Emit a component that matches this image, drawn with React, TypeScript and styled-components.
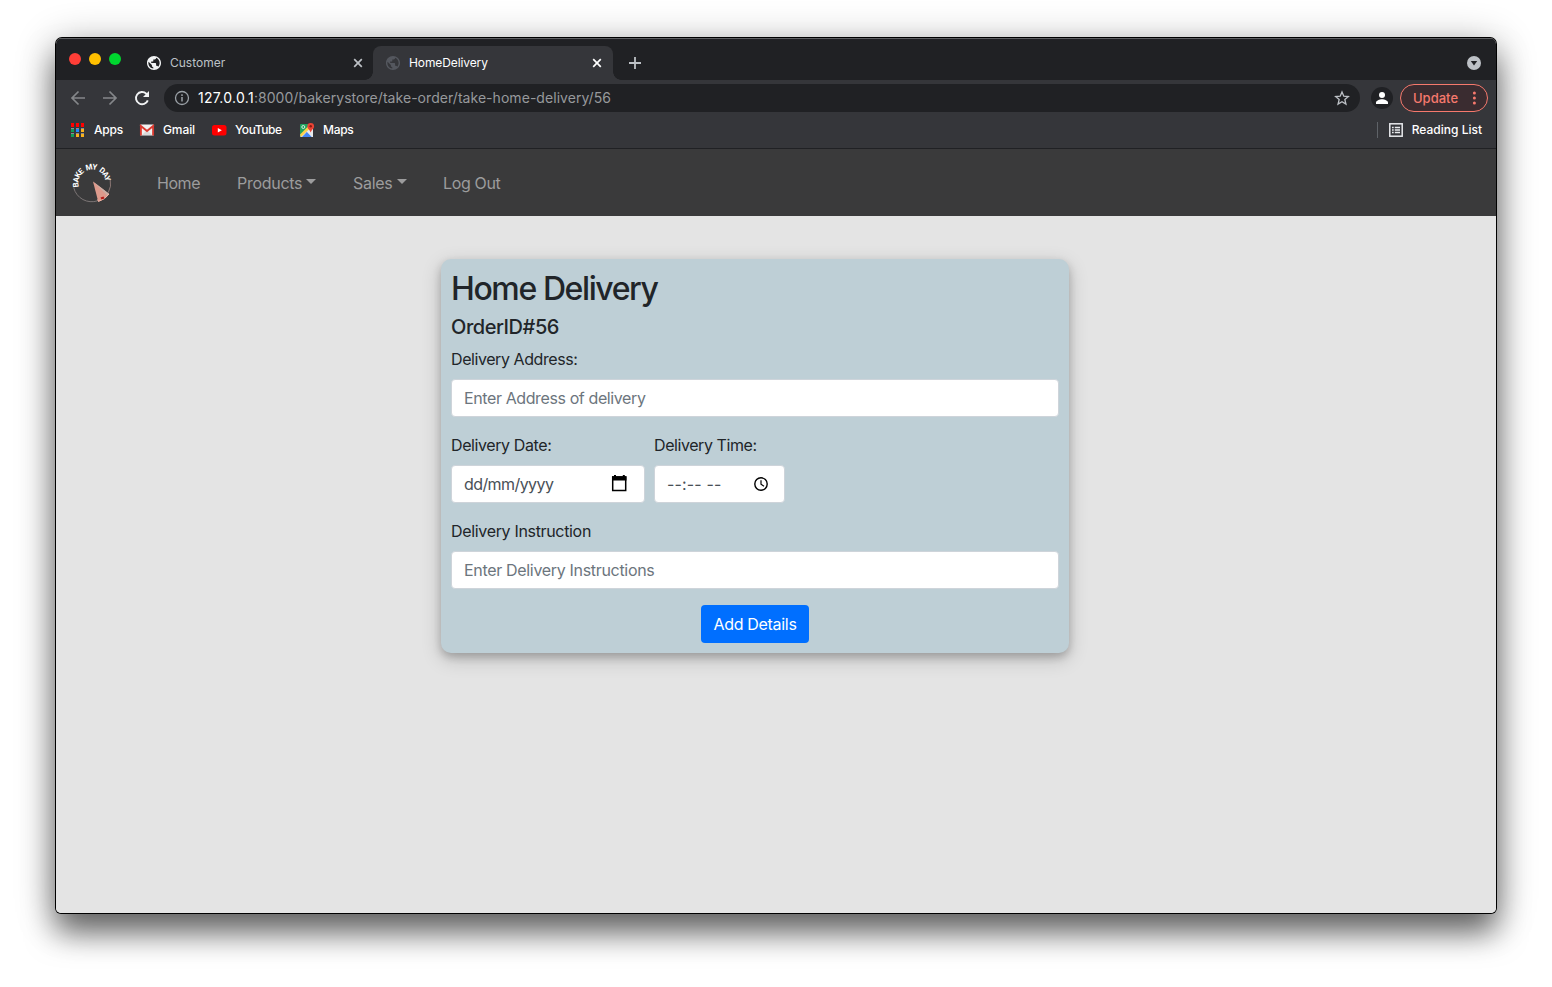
import React from "react";
import styled, { createGlobalStyle } from "styled-components";

const GlobalStyle = createGlobalStyle`
  * { box-sizing: border-box; }
  body {
    margin: 0;
    background: #fff;
    font-family: Inter, Roboto, "Liberation Sans", sans-serif;
    overflow: hidden;
  }
`;

const Desktop = styled.main`
  height: 987px;
  padding: 38px 56px 0;
`;

const Window = styled.div`
  display: flex;
  flex-direction: column;
  width: 1440px;
  height: 875px;
  border-radius: 6px 6px 5px 5px;
  overflow: hidden;
  background: #e4e4e4;
  box-shadow: 0 0 0 1px #000, 0 20px 30px rgba(0, 0, 0, 0.5), 0 6px 40px rgba(0, 0, 0, 0.32);
`;

const TabStrip = styled.div`
  display: flex;
  height: 42px;
  background: #202124;
  box-shadow: inset 0 1px 0 #5f6063;
`;

const Lights = styled.div`
  display: flex;
  gap: 8px;
  padding: 15px 0 0 13px;
  width: 78px;
`;

const Light = styled.span<{ $color: string }>`
  width: 12px;
  height: 12px;
  border-radius: 50%;
  background: ${(p) => p.$color};
`;

const Tab = styled.div<{ $active?: boolean }>`
  display: flex;
  align-items: center;
  position: relative;
  width: ${(p) => (p.$active ? 240 : 239)}px;
  height: 34px;
  margin-top: 8px;
  padding: 0 ${(p) => (p.$active ? 10 : 9)}px 0 12px;
  border-radius: 8px 8px 0 0;
  background: ${(p) => (p.$active ? "#35363a" : "transparent")};
  color: ${(p) => (p.$active ? "#fff" : "#bdc1c6")};
  &::before, &::after {
    content: "";
    display: ${(p) => (p.$active ? "block" : "none")};
    position: absolute;
    bottom: 0;
    width: 8px;
    height: 8px;
  }
  &::before {
    left: -8px;
    background: radial-gradient(circle at 0 0, transparent 7.5px, #35363a 8px);
  }
  &::after {
    right: -8px;
    background: radial-gradient(circle at 100% 0, transparent 7.5px, #35363a 8px);
  }
`;

const TabTitle = styled.span<{ $spacing: number }>`
  flex: 1;
  margin-left: 8px;
  padding-bottom: 2px;
  font-size: 12px;
  letter-spacing: ${(p) => p.$spacing}px;
`;

const NewTab = styled.div`
  flex: 1;
  padding: 18px 0 0 15px;
  line-height: 0;
`;

const TabSearch = styled.div`
  padding: 18px 15px 0 0;
  line-height: 0;
`;

const Toolbar = styled.div`
  display: flex;
  align-items: center;
  height: 36px;
  padding: 0 8px 0 14px;
  background: #35363a;
`;

const NavIcons = styled.div`
  display: flex;
  gap: 16px;
  width: 94px;
`;

const AddressBar = styled.div`
  display: flex;
  align-items: center;
  width: 1196px;
  height: 28px;
  padding: 0 10px;
  border-radius: 14px;
  background: #202124;
`;

const Url = styled.span`
  flex: 1;
  margin-left: 8px;
  padding-bottom: 1px;
  font-size: 14px;
  letter-spacing: 0.045px;
  color: #97999c;
`;

const Host = styled.span`
  color: #fff;
  letter-spacing: 0.3px;
`;

const Avatar = styled.div`
  width: 22px;
  height: 22px;
  margin: 0 7px 0 11px;
  border-radius: 50%;
  background: #202124;
  line-height: 0;
`;

const UpdateButton = styled.button`
  display: flex;
  align-items: center;
  justify-content: space-between;
  width: 88px;
  height: 28px;
  padding: 0 11px 0 12px;
  border: 1px solid #f6796d;
  border-radius: 14px;
  background: #3a2c30;
  color: #f6796d;
  font: 500 13px Inter, sans-serif;
  letter-spacing: 0;
`;

const Bookmarks = styled.div`
  display: flex;
  align-items: center;
  height: 33px;
  padding: 0 14px 5px;
  background: #35363a;
  border-bottom: 1px solid #202124;
`;

const Bookmark = styled.div<{ $width?: number; $spacing?: number }>`
  display: flex;
  align-items: center;
  gap: 8px;
  width: ${(p) => (p.$width ? `${p.$width}px` : "auto")};
  color: #fff;
  font-size: 12px;
  font-weight: 500;
  white-space: nowrap;
  letter-spacing: ${(p) => p.$spacing ?? 0}px;
`;

const Spacer = styled.div`
  flex: 1;
`;

const Divider = styled.div`
  width: 1px;
  height: 16px;
  margin-right: 11px;
  background: #5f6368;
`;

const Navbar = styled.nav`
  display: flex;
  align-items: center;
  height: 67px;
  padding-left: 16px;
  background: #3a3a3b;
`;

const Brand = styled.div`
  width: 85px;
  line-height: 0;
`;

const NavLink = styled.a<{ $width: number; $spacing: number }>`
  display: flex;
  align-items: center;
  width: ${(p) => p.$width}px;
  color: #9c9c9d;
  font-size: 16px;
  letter-spacing: ${(p) => p.$spacing}px;
  white-space: nowrap;
`;

const Caret = styled.span`
  margin: 0 0 2px 4px;
  border-top: 5px solid;
  border-left: 5px solid transparent;
  border-right: 5px solid transparent;
`;

const Page = styled.section`
  flex: 1;
  padding: 43px 0 0 385px;
  background: #e4e4e4;
`;

const Card = styled.form`
  width: 628px;
  height: 394px;
  padding: 10px;
  border-radius: 10px;
  background: #becfd6;
  color: #212529;
  box-shadow: 0 4px 8px rgba(0, 0, 0, 0.2), 0 6px 20px rgba(0, 0, 0, 0.19);
`;

const Title = styled.h2`
  margin: 0 0 7px;
  padding-top: 1px;
  font-size: 32px;
  font-weight: 500;
  line-height: 38px;
  letter-spacing: -1.4px;
`;

const Subtitle = styled.h5`
  margin: 0 0 8px;
  font-size: 20px;
  font-weight: 500;
  line-height: 24px;
  letter-spacing: -0.45px;
`;

const Group = styled.div<{ $width?: number }>`
  width: ${(p) => (p.$width ? `${p.$width}px` : "100%")};
  margin-bottom: 16px;
`;

const Row = styled.div`
  display: flex;
  gap: 9px;
`;

const Label = styled.label<{ $spacing: number }>`
  display: block;
  margin-bottom: 8px;
  font-size: 16px;
  line-height: 24px;
  letter-spacing: ${(p) => p.$spacing}px;
  white-space: nowrap;
`;

const Field = styled.div<{ $spacing: number; $dark?: boolean }>`
  display: flex;
  align-items: center;
  justify-content: space-between;
  height: 38px;
  padding: 0 14px 0 12px;
  border: 1px solid #ced4da;
  border-radius: 4px;
  background: #fff;
  color: ${(p) => (p.$dark ? "#495057" : "#6c757d")};
  font-size: 16px;
  letter-spacing: ${(p) => p.$spacing}px;
  white-space: nowrap;
`;

const Actions = styled.div`
  display: flex;
  justify-content: center;
`;

const Submit = styled.button`
  width: 108px;
  height: 38px;
  padding: 0;
  border: 0;
  border-radius: 4px;
  background: #006fff;
  color: #fff;
  font: 400 16px Inter, sans-serif;
  letter-spacing: -0.3px;
  white-space: nowrap;
`;

const Globe = ({ color }: { color: string }) => (
  <svg width="16" height="16" viewBox="0.6 0.6 22.800 22.800" fill={color}>
    <path d="M12 2C6.480 2 2 6.480 2 12s4.480 10 10 10 10-4.480 10-10S17.520 2 12 2zm-1 17.930c-3.950-.49-7-3.850-7-7.930 0-.62.08-1.210.21-1.790L9 15v1c0 1.100.9 2 2 2v1.930zm6.900-2.540c-.26-.81-1-1.390-1.900-1.390h-1v-3c0-.55-.45-1-1-1H8v-2h2c.55 0 1-.45 1-1V7h2c1.100 0 2-.9 2-2v-.41c2.930 1.190 5 4.060 5 7.410 0 2.080-.8 3.970-2.100 5.390z" />
  </svg>
);

const Close = ({ color }: { color: string }) => (
  <svg width="12" height="12" viewBox="0 0 12 12" stroke={color} strokeWidth="1.700">
    <path d="m2.200 2.200 7.600 7.600M9.800 2.200 2.200 9.800" />
  </svg>
);

const dots = ["#f00", "#f00", "#f00", "#0f9d58", "#1e88ff", "#f9b21d", "#0f9d58", "#f9b21d", "#f9b21d"];

const AppsIcon = () => (
  <svg width="16" height="16" viewBox="0 0 16 16">
    {dots.map((c, i) => (
      <g key={i}>
        <rect x={1 + (i % 3) * 5} y={2 + Math.floor(i / 3) * 5} width="3" height="3" fill={c} />
        <rect x={1 + (i % 3) * 5} y={1 + Math.floor(i / 3) * 5} width="3" height="1" fill={i < 3 ? c : "#8b8c8e"} />
      </g>
    ))}
  </svg>
);

const GmailIcon = () => (
  <svg width="16" height="16" viewBox="0 0 16 16">
    <rect x="1" y="2.500" width="14" height="11" rx="1" fill="#f1f1f1" />
    <path d="m3 13 5-5 5 5" fill="#dadada" />
    <path d="M1.900 13.500V4L8 9l6.100-5v9.500" fill="none" stroke="#d93a30" strokeWidth="1.900" />
  </svg>
);

const YouTubeIcon = () => (
  <svg width="16" height="16" viewBox="0 0 16 16">
    <rect x="1" y="3" width="14.500" height="10.500" rx="2.500" fill="#f00" />
    <path d="m6.800 6 4 2.200-4 2.200Z" fill="#fff" />
  </svg>
);

const MapsIcon = () => (
  <svg width="16" height="16" viewBox="0 0 16 16">
    <rect x="1" y="2" width="13" height="13" rx="1" fill="#1fa15d" />
    <path d="M1 14 13 3l1 1v10l-1 1H2Z" fill="#e8eaed" />
    <path d="m1 12.500 9-9 2 2-10 9.500Z" fill="#fbd04b" />
    <path d="m3 15 5-5.200 5 5.200Z" fill="#4285f4" />
    <path d="m8 10 1.500-1.500L14 13v2h-1Z" fill="#e8eaed" />
    <circle cx="4.300" cy="5" r="1.500" fill="none" stroke="#fff" strokeWidth=".8" />
    <path d="M11.700 1a3.400 3.400 0 0 0-3.400 3.400c0 2.400 2.700 3.200 3.400 6.200.7-3 3.400-3.800 3.400-6.200A3.400 3.400 0 0 0 11.700 1Z" fill="#ea4335" />
    <circle cx="11.700" cy="4.300" r="1.200" fill="#8b1a12" />
  </svg>
);

const BrandLogo = () => (
  <svg width="42" height="44" viewBox="0 0 42 44">
    <defs>
      <path id="brand-arc" d="M7 26A13.600 13.600 0 1 1 33.600 23" />
    </defs>
    <path d="M1.800 27A18.500 18.500 0 0 0 25.500 39.800" fill="none" stroke="#8d8585" strokeWidth=".8" />
    <path d="M38.200 18.500A18.500 18.500 0 0 1 36.300 31.500" fill="none" stroke="#a08683" strokeWidth=".8" />
    <path d="M21 20.500 37 32.800q-3.500 5.500-10.800 7.800Z" fill="#dd9a8c" />
    <path d="m21 20.500 16 12.300-1.500 1.800Z" fill="#c9b0a6" />
    <path d="m25.500 38.500 1 2q7-2.200 10.500-7.500" fill="none" stroke="#f4b5a5" strokeWidth="1" />
    <path d="m28.500 36.500 3-1 1 2-3 1Z" fill="#b51c18" />
    <text fill="#fff" fontFamily="Roboto, sans-serif" fontWeight="700" fontSize="7.800" wordSpacing="1.600" letterSpacing="-0.800">
      <textPath href="#brand-arc">BAKE MY DAY</textPath>
    </text>
  </svg>
);

export default function App() {
  return (
    <>
      <GlobalStyle />
      <Desktop>
        <Window>
          <TabStrip>
            <Lights>
              <Light $color="#ff3e37" />
              <Light $color="#ffc000" />
              <Light $color="#00d62f" />
            </Lights>
            <Tab>
              <Globe color="#f1f3f4" />
              <TabTitle $spacing={0}>Customer</TabTitle>
              <Close color="#bdc1c6" />
            </Tab>
            <Tab $active>
              <Globe color="#54575e" />
              <TabTitle $spacing={-0.1}>HomeDelivery</TabTitle>
              <Close color="#fff" />
            </Tab>
            <NewTab>
              <svg width="14" height="14" viewBox="0 0 14 14" stroke="#bdc1c6" strokeWidth="1.800">
                <path d="M7 1v12M1 7h12" />
              </svg>
            </NewTab>
            <TabSearch>
              <svg width="14" height="14" viewBox="0 0 14 14">
                <circle cx="7" cy="7" r="7" fill="#bdc1c6" />
                <path d="M3.800 5h6.400L7 9.500Z" fill="#202124" />
              </svg>
            </TabSearch>
          </TabStrip>

          <Toolbar>
            <NavIcons>
              <svg width="16" height="16" viewBox="0 0 16 16" fill="none" stroke="#85878a" strokeWidth="1.700">
                <path d="M15 8H2M8.500 1.500 2 8l6.500 6.500" />
              </svg>
              <svg width="16" height="16" viewBox="0 0 16 16" fill="none" stroke="#85878a" strokeWidth="1.700">
                <path d="M1 8h13M7.500 1.500 14 8l-6.500 6.500" />
              </svg>
              <svg width="16" height="16" viewBox="0 0 16 16">
                <path d="M13.800 10.300A6.100 6.100 0 1 1 12.300 3.700L14 5.500" fill="none" stroke="#f1f3f4" strokeWidth="1.900" />
                <path d="M15 1v6H9Z" fill="#f1f3f4" />
              </svg>
            </NavIcons>
            <AddressBar>
              <svg width="16" height="16" viewBox="0 0 16 16" fill="none" stroke="#9aa0a6">
                <circle cx="8" cy="8" r="6.500" strokeWidth="1.300" />
                <path d="M8 7v4.500M8 4.300v1.600" strokeWidth="1.500" />
              </svg>
              <Url>
                <Host>127.0.0.1</Host>:8000/bakerystore/take-order/take-home-delivery/56
              </Url>
              <svg width="16" height="16" viewBox="0 0 24 24" fill="none" stroke="#bdc1c6" strokeWidth="2">
                <path d="m12 3 2.700 6.300 6.800.6-5.200 4.500 1.600 6.700-5.900-3.600-5.900 3.600 1.600-6.700L2.500 9.900l6.800-.6Z" />
              </svg>
            </AddressBar>
            <Avatar>
              <svg width="22" height="22" viewBox="0 0 22 22" fill="#fff">
                <circle cx="11" cy="8" r="3" />
                <path d="M5 17v-1.500c0-2 3.500-3.300 6-3.300s6 1.300 6 3.300V17Z" />
              </svg>
            </Avatar>
            <UpdateButton>
              Update
              <svg width="4" height="14" viewBox="0 0 4 14" fill="#f6796d">
                <circle cx="2.400" cy="2" r="1.500" />
                <circle cx="2.400" cy="7" r="1.500" />
                <circle cx="2.400" cy="12" r="1.500" />
              </svg>
            </UpdateButton>
          </Toolbar>

          <Bookmarks>
            <Bookmark $width={69} $spacing={-0.2}><AppsIcon />Apps</Bookmark>
            <Bookmark $width={72} $spacing={-0.1}><GmailIcon />Gmail</Bookmark>
            <Bookmark $width={88} $spacing={-0.45}><YouTubeIcon />YouTube</Bookmark>
            <Bookmark $spacing={-0.3}><MapsIcon />Maps</Bookmark>
            <Spacer />
            <Divider />
            <Bookmark>
              <svg width="15" height="14" viewBox="0 0 15 14" fill="none" stroke="#e8eaed">
                <rect x=".8" y=".8" width="12.400" height="12.400" strokeWidth="1.500" />
                <path d="M3 4.500h1.700M3 7h1.700M3 9.500h1.700M5.800 4.500H11M5.800 7H11M5.800 9.500H11" strokeWidth="1.300" />
              </svg>
              Reading List
            </Bookmark>
          </Bookmarks>

          <Navbar>
            <Brand><BrandLogo /></Brand>
            <NavLink $width={80} $spacing={-0.45}>Home</NavLink>
            <NavLink $width={116} $spacing={-0.28}>Products<Caret /></NavLink>
            <NavLink $width={90} $spacing={-0.28}>Sales<Caret /></NavLink>
            <NavLink $width={70} $spacing={-0.35}>Log Out</NavLink>
          </Navbar>

          <Page>
            <Card>
              <Title>Home Delivery</Title>
              <Subtitle>OrderID#56</Subtitle>
              <Group>
                <Label $spacing={-0.42}>Delivery Address:</Label>
                <Field $spacing={-0.39}>Enter Address of delivery</Field>
              </Group>
              <Row>
                <Group $width={194}>
                  <Label $spacing={-0.4}>Delivery Date:</Label>
                  <Field $spacing={-0.58} $dark>
                    dd/mm/yyyy
                    <svg width="20" height="20" viewBox="0 0 20 20">
                      <path d="M2.700 3h13v13.500h-13Z" fill="none" stroke="#000" strokeWidth="1.500" />
                      <path d="M2 2.200h14.500V6.500H2ZM4 1h2v2H4ZM12.800 1h2v2h-2Z" />
                    </svg>
                  </Field>
                </Group>
                <Group $width={131}>
                  <Label $spacing={-0.42}>Delivery Time:</Label>
                  <Field $spacing={0.15} $dark>
                    --:-- --
                    <svg width="18" height="18" viewBox="0 0 18 18" fill="none" stroke="#000">
                      <circle cx="9" cy="9" r="6.200" strokeWidth="1.400" />
                      <path d="M9 5.200v4l3 2" strokeWidth="1.200" />
                    </svg>
                  </Field>
                </Group>
              </Row>
              <Group>
                <Label $spacing={-0.33}>Delivery Instruction</Label>
                <Field $spacing={-0.32}>Enter Delivery Instructions</Field>
              </Group>
              <Actions>
                <Submit type="button">Add Details</Submit>
              </Actions>
            </Card>
          </Page>
        </Window>
      </Desktop>
    </>
  );
}
